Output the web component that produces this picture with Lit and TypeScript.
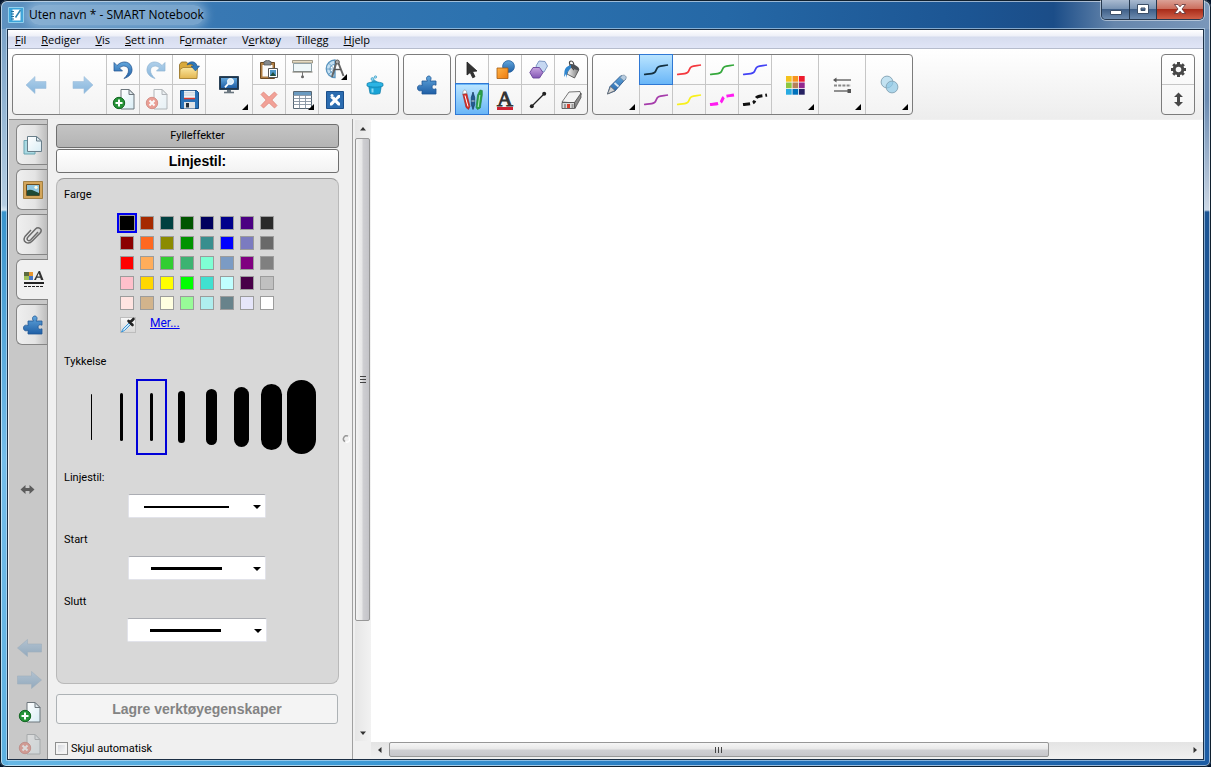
import { LitElement, html, css, svg, nothing, TemplateResult } from "lit";
import { customElement, state } from "lit/decorators.js";
import { classMap } from "lit/directives/class-map.js";
import { styleMap } from "lit/directives/style-map.js";

const icon = (w: number, h: number, body: unknown) =>
  html`<svg class="icon" width=${w} height=${h} viewBox="0 0 ${w} ${h}" aria-hidden="true">${body}</svg>`;

const pageShape = svg`
  <path d="M9 .5h8l5 5v14.500H9z" fill="url(#paper)" stroke="#6d767c"/>
  <path d="M17 .5v5h5z" fill="#dfe7ec" stroke="#6d767c"/>`;

const squiggle = (color: string, width = 1.7, dash = "") =>
  icon(26, 14, svg`<path d="M1 11.500c4-.5 8-.3 10.500-2 2-1.400 1.500-4.500 4-5.700 2.200-1 5-1 9.500-1.800"
    fill="none" stroke=${color} stroke-width=${width} stroke-dasharray=${dash || nothing}/>`);

const puzzle = svg`
  <path d="M5 6h5.500c-2-2.500-.7-5 1.300-5s3.300 2.500 1.200 5H19v4.200c-2.200-1-4-.2-4 1.800s1.800 2.800 4 1.800V19H5v-3.800c-2 1.300-4.500.6-4.500-2.200S3 9.500 5 10.800z"
    fill="url(#blue)" stroke="#1f5796" stroke-width=".8"/>`;

const bigArrow = (flip: boolean) => icon(22, 18, svg`
  <path transform=${flip ? "translate(22 0) scale(-1 1)" : nothing} d="M1 9 10 .5v5h11v7H10v5z" fill="url(#sky)" stroke="#9fc0dc" stroke-width=".6"/>`);

const railArrow = (flip: boolean) => icon(25, 18, svg`
  <path transform=${flip ? "translate(25 0) scale(-1 1)" : nothing} d="M.5 9 10.500.5v4.500h14v8h-14v4.500z" fill="url(#slate)" stroke="#8fa6ba" stroke-width=".6"/>`);

const icons: Record<string, TemplateResult> = {
  back: bigArrow(false),
  forward: bigArrow(true),
  undo: icon(20, 20, svg`<path d="M1 2.500v8.500h8.500L6.500 8c3-3 8.500-2.500 9 2 .2 3-1.500 5.500-4.500 8.500 5-1.500 8.500-5 8-9.500C18.300 1.500 9.500-.5 4 5.500z" fill="url(#blue)" stroke="#1d4f8c" stroke-width=".7"/>`),
  redo: icon(20, 20, svg`<path transform="translate(20 0) scale(-1 1)" d="M1 2.500v8.500h8.500L6.500 8c3-3 8.500-2.500 9 2 .2 3-1.500 5.500-4.500 8.500 5-1.500 8.500-5 8-9.500C18.300 1.500 9.500-.5 4 5.500z" fill="url(#sky)" stroke="#90b4d2" stroke-width=".7"/>`),
  open: icon(22, 20, svg`
    <path d="M1.500 18V4.500L3.500 2h5l1.500 2h8v14z" fill="#d9a93a" stroke="#8a6a23" stroke-width=".8"/>
    <path d="M1.500 18.500 2 9.500 5 7.500h14.500l-.5 11z" fill="url(#gold)" stroke="#a17c2c" stroke-width=".8"/>
    <path d="M9 5c2-4.500 9-4.500 10 1h2.500L17.500 11 13 6h2.500c-1-2.500-4-2.500-6.500-1z" fill="#2f79b9" stroke="#1d4f8c" stroke-width=".6"/>`),
  addPage: icon(23, 21, svg`${pageShape}<circle cx="7" cy="14" r="5.700" fill="#259337" stroke="#126522"/>
    <path d="M7 10.500v7M3.500 14h7" stroke="#fff" stroke-width="2"/>`),
  delPage: icon(23, 21, svg`<g opacity=".5">${pageShape}<circle cx="7" cy="14" r="5.700" fill="#e04a36" stroke="#b52f20"/>
    <path d="m4.500 11.500 5 5m0-5-5 5" stroke="#fff" stroke-width="2"/></g>`),
  save: icon(19, 19, svg`
    <path d="M.5.500h16l2 2v16H.5z" fill="#2872b8" stroke="#164a80"/>
    <path d="M4 .8h11V9H4z" fill="#eef3f7"/><path d="M4 2.800h11M4 5h11" stroke="#b9c7d3" stroke-width=".8"/>
    <path d="M4 8.500h11" stroke="#d8372c" stroke-width="1.500"/>
    <path d="M4 12h11v6.500H4z" fill="#dfe3e6"/><path d="M6 13h3v4.500H6z" fill="#24303c"/>`),
  screen: icon(20, 18, svg`
    <path d="M.5.500h19v13H.5z" fill="#20364c" stroke="#2c4358"/><path d="M2 2h16v10H2z" fill="url(#blue)"/>
    <circle cx="11.500" cy="5.500" r="3" fill="#d8ecf9" stroke="#fff"/><path d="m9.300 7.700-3.300 3.600" stroke="#fff" stroke-width="1.800"/>
    <path d="M8 14h4v2H8z" fill="#6a767f"/><path d="M5 16.500h10" stroke="#6a767f" stroke-width="1.600"/>`),
  paste: icon(20, 20, svg`
    <path d="M1.500 2.500h14v16h-14z" fill="#b07f45" stroke="#6a4923"/><path d="M3.500 5h10v11.500h-10z" fill="#fafafa"/>
    <path d="M5 1.500h1.500a2 2 0 0 1 4 0H12V5H5z" fill="#84898d" stroke="#54585b" stroke-width=".8"/>
    <path d="M9.500 8.500h9v9h-9z" fill="#fff" stroke="#555"/><path d="M11 10h6v6h-6z" fill="#4d95c6"/><path d="m11 16 3-4 3 4z" fill="#214e3e"/>`),
  remove: icon(18, 18, svg`<path d="M3.500 1 9 6.200 14.500 1 17 3.500 11.800 9l5.200 5.500-2.500 2.500L9 11.800 3.500 17 1 14.500 6.200 9 1 3.500z" fill="#f2a197" stroke="#dd8479" stroke-width=".8"/>`),
  shade: icon(21, 19, svg`
    <path d="M.5.500h20v2.500H.5z" fill="#e5dcc4" stroke="#8b8472" stroke-width=".8"/><path d="M1.500 3.500h18v8h-18z" fill="#eef7f9" stroke="#8fa0a6"/>
    <path d="M.5 12h20" stroke="#736f63"/><path d="M10.500 12v5" stroke="#777"/><circle cx="10.500" cy="16.800" r="1.500" fill="#666"/>`),
  table: icon(19, 18, svg`
    <path d="M.5.500h18v17H.5z" fill="#fff" stroke="#566673"/><path d="M1 1h17v3H1z" fill="#6a9ac0"/>
    <path d="M.5 4.500h18M.5 7.500h18M.5 10.500h18M.5 13.500h18M6.500 4v13.500M12.500 4v13.500" stroke="#8592a0" stroke-width=".9"/>`),
  measure: icon(22, 21, svg`
    <path d="M11 1A8.700 8.700 0 0 0 11 18.500z" fill="#c5e0f2" stroke="#5b95bf" stroke-width="1.300"/>
    <path d="M10.500 5.500a4.500 4.500 0 0 0 0 9z" fill="#fff" stroke="#5b95bf"/><path d="M2.500 10H10M4.500 4l6 6-6 5.500" stroke="#5b95bf" stroke-width=".8" fill="none"/>
    <path d="M12.500 3 8 18M14 3l5.500 14" stroke="#666" stroke-width="2"/><circle cx="13.300" cy="3" r="2" fill="#aaa" stroke="#555"/><path d="M10 10.500h7" stroke="#555" stroke-width="1.400"/>`),
  exchange: icon(18, 18, svg`
    <path d="M.5.500h17v17H.5z" fill="#2b6cb0" stroke="#1b4f8a"/>
    <path d="M4 6.500 7 9l-3 3v2.500h2l3-3 3 3h2V12l-3-3 3-2.500V4h-2L9.500 7 8 5.500" fill="#fff"/><circle cx="6" cy="4.500" r="1.500" fill="#fff"/>`),
  cup: icon(18, 20, svg`
    <circle cx="6.500" cy="4" r="1.500" fill="#8bd5f0" stroke="#2791bd" stroke-width=".6"/><circle cx="9.500" cy="2" r="1.200" fill="#a0dcf3" stroke="#2791bd" stroke-width=".6"/>
    <path d="M4 8 8 4.500 13.500 8z" fill="#3aa6cf"/>
    <path d="M2.500 10h13l-1.500 8.500c-3 1-7 1-10 0z" fill="#19a3d6" stroke="#0f7ba6" stroke-width=".7"/>
    <path d="M1 8.500c3-2 13-2 16 0v2.500c-3 1.500-13 1.500-16 0z" fill="#2cb4e4" stroke="#0f7ba6" stroke-width=".7"/>
    <path d="M6.500 13.500v4" stroke="#8bd9f4" stroke-width="2"/>`),
  puzzle: icon(21, 20, puzzle),
  pointer: icon(12, 18, svg`<path d="M1 1v13l3.200-2.500 2.500 5.300 2.300-1.100L6.500 10.500l4.500-.5z" fill="#333" stroke="#222" stroke-width=".8"/>`),
  shapes: icon(19, 19, svg`<circle cx="12.500" cy="6.500" r="5.900" fill="url(#blue)" stroke="#265f9d" stroke-width=".8"/>
    <path d="M1 8h11v10.500H1z" fill="url(#orange)" stroke="#a55a11" stroke-width=".8"/>`),
  polygons: icon(19, 19, svg`<path d="m10 1 6 .5 2.500 4.500-3.500 6-6-1L7 6z" fill="#c6d8f2" stroke="#7390bd" stroke-width=".9"/>
    <path d="M4 7.500h6.500L14 12.500 10.500 18H4L.8 12.500z" fill="url(#purple)" stroke="#67439a" stroke-width=".9"/>`),
  fill: icon(18, 20, svg`<path d="m8 4.500 9 5-4.500 8.500-7.500-4z" fill="url(#metal)" stroke="#444" stroke-width=".8"/>
    <path d="M12 10C6 4 7 1 9 1s3 2 3 6" fill="none" stroke="#444" stroke-width="1.200"/><ellipse cx="12.500" cy="7" rx="5" ry="1.900" transform="rotate(29 12.500 7)" fill="#4a4f55"/>
    <path d="M9 5C5 6 3 8 2.500 11L2 17l2-3 .5 4 1-6L9 8z" fill="#2f86cf"/>`),
  pens: icon(21, 22, svg`
    <path d="m.8 5 4-.8L8 17.500 6.500 20.500 4 18.500z" fill="#d42a25" stroke="#9b2825" stroke-width=".6"/><path d="M.8 5c0-3 .7-4 2-4s2 1.500 2 3.200z" fill="#fff" stroke="#888" stroke-width=".6"/><path d="m3 6.500 3 11" stroke="#fff" stroke-width="1"/>
    <path d="M9.300 8.500 11 3l1.700 5.500v7L11 20.500l-1.700-5z" fill="#245b92" stroke="#173a5d" stroke-width=".7"/><path d="M9.500 12h3" stroke="#cfd8e0"/>
    <path d="m15.500 6 2.500-5 2.300.5V6l-2 13-2.800 1.500-1.500-2z" fill="#2aa14b" stroke="#1d7a36" stroke-width=".6"/><path d="m17.800 6-1.600 12" stroke="#a8e2b5" stroke-width="1.200"/>`),
  text: html`<span class="letter">A</span>`,
  line: icon(18, 18, svg`<path d="M3 15 15 3" stroke="#222" stroke-width="1.200"/><circle cx="2.800" cy="15.200" r="2" fill="#222"/><circle cx="15.200" cy="2.800" r="2" fill="#222"/>`),
  eraser: icon(21, 20, svg`
    <path d="m1 12 7-10 11-.5 1 3-6.500 8.500z" fill="#f3f3f3" stroke="#555" stroke-width=".8"/>
    <path d="M13.500 12.500 20 3v4.500l-6 11z" fill="#8c8c8c" stroke="#444" stroke-width=".7"/><path d="M1 12.500h12.500v6H1z" fill="#dcdcdc" stroke="#444" stroke-width=".8"/><path d="M6 14h3v4H6z" fill="#d6402f"/><path d="M3 14h2v4H3zM10.500 14h2v4h-2z" fill="#9a9a9a"/>`),
  pen: icon(21, 21, svg`<path d="m15 1.500 4.500 3.500L9 17l-7.500 3L4 12.500z" fill="url(#blue)" stroke="#234c82" stroke-width=".8"/>
    <path d="M14 3.500c2-2.500 4-3 5.500-1.500s.5 3-1.500 5z" fill="#b5cbe0" stroke="#6c8397" stroke-width=".7"/><path d="m4.500 12.500 4.500 4-7.500 3.500z" fill="#d5d5d5" stroke="#666" stroke-width=".7"/><path d="m8.500 9 4 3.500" stroke="#dce8f2" stroke-width="1.800"/>`),
  palette: icon(20, 20, svg`${["#f4c21c", "#f7941e", "#ed1c2e", "#8dc63f", "#b5815a", "#92278f", "#29abe2", "#0071bc", "#262262"].map(
    (c, i) => svg`<rect x=${1 + (i % 3) * 6.500} y=${1 + Math.floor(i / 3) * 6.500} width="5.700" height="5.700" fill=${c}/>`)}`),
  lineStyles: icon(18, 18, svg`<path d="M2 4h16" stroke="#909090" stroke-width="2"/><path d="m0 4 3.500-2.500v5z" fill="#555"/>
    <path d="M1 9.500h17" stroke="#8a8a8a" stroke-width="2.200" stroke-dasharray="3 1.200"/><path d="M1 15h15" stroke="#909090" stroke-width="2"/><path d="M14.500 13H18v4h-3.500z" fill="#555"/>`),
  transparency: icon(19, 19, svg`<circle cx="7" cy="7" r="5.900" fill="#b5dcef" fill-opacity=".8" stroke="#8aa9ba"/><circle cx="12" cy="12" r="5.900" fill="#8cc8e6" fill-opacity=".7" stroke="#8aa9ba"/>`),
  gear: icon(17, 17, svg`<path d="M8.500 1v15M1 8.500h15M3.200 3.200l10.600 10.600M13.800 3.200 3.200 13.800" stroke="#484848" stroke-width="3"/><circle cx="8.500" cy="8.500" r="4.300" fill="#f9f9f9" stroke="#484848" stroke-width="3"/>`),
  upDown: icon(11, 15, svg`<path d="M5.500.5 10 5H7v5h3l-4.500 4.500L1 10h3V5H1z" fill="#484848"/>`),
  leftRight: icon(15, 11, svg`<path d="M.5 5.500 5.500 1v3h4V1l5 4.500-5 4.500V7h-4v3z" fill="#5c5c5c"/>`),
  pages: icon(20, 20, svg`<path d="M1 5.500h11v13.500H1z" fill="#a9d9e2" stroke="#6ba5b2"/><path d="M4.500 1.500h9L18.500 6v10.500h-14z" fill="url(#paper)" stroke="#697e8a"/><path d="M13.500 1.500V6h5z" fill="#dce8ee" stroke="#697e8a"/>`),
  picture: icon(20, 18, svg`<path d="M.5.500h19v17H.5z" fill="#d3a55a" stroke="#94702f" stroke-width=".8"/><path d="M3.500 3.500h13v11h-13z" fill="#8fc6de" stroke="#6e4e1d"/>
    <path d="M4 9.500c4-2 8 1 12 2.500v2.500H4z" fill="#1f4a35"/><circle cx="13" cy="6.300" r="1.600" fill="#fffbe2"/>`),
  clip: icon(20, 19, svg`<path d="m15 7-7 7.500c-3 3-5-.5-3-2.500l7.500-8c2.500-2.500 7.500-.5 5 3.500L9.500 15.800c-4.500 4.700-10.500 1-7.500-4.300l6-6.500" fill="none" stroke="#6b6b6b" stroke-width="1.500"/>`),
  properties: icon(20, 17, svg`
    <path d="M0 1h5v4H0z" fill="#5b6a3f"/><path d="M5 1h4v4H5z" fill="#e9962e"/><path d="M0 5h5v4H0z" fill="#a0bf5a"/><path d="M5 5h4v4H5z" fill="#4574c4"/>
    <path d="M14.700 0h1.300l3.500 9H17l-.8-2.300h-3.400L12 9h-2zm-1.400 5.500h2.600L14.700 2.200z" fill="#333"/>
    <path d="M0 12h20" stroke="#222" stroke-width="2"/><path d="M0 15.500h20" stroke="#222" stroke-dasharray="3 1"/>`),
  dropper: icon(16, 16, svg`<path d="m10 5-7 7-1.500 3 3-1.500 7-7" fill="#cdeafc" stroke="#3b94d6"/><path d="m8.500 4 4 4M10 5.500 13.500 2" stroke="#222" stroke-width="2.600" stroke-linecap="round"/>`),
};

interface Tool { id: string; label: string; icon: TemplateResult; menu?: boolean; off?: boolean; }
const t = (id: string, label: string, menu = false, off = false): Tool => ({ id, label, icon: icons[id], menu, off });
const stroke = (id: string, label: string, drawn: TemplateResult): Tool => ({ id, label, icon: drawn });

const groups: Tool[][][] = [
  [
    [t("back", "Forrige side", false, true)], [t("forward", "Neste side", false, true)],
    [t("undo", "Angre"), t("addPage", "Legg til side")],
    [t("redo", "Gjør om", false, true), t("delPage", "Slett side", false, true)],
    [t("open", "Åpne"), t("save", "Lagre")],
    [t("screen", "Vis skjermer", true)],
    [t("paste", "Lim inn"), t("remove", "Slett", false, true)],
    [t("shade", "Skjermskygge"), t("table", "Tabell", true)],
    [t("measure", "Måleverktøy", true), t("exchange", "SMART Exchange")],
    [t("cup", "Aktivitet")],
  ],
  [[t("puzzle", "Tillegg")]],
  [
    [t("pointer", "Velg"), t("pens", "Penner")], [t("shapes", "Former"), t("text", "Tekst")],
    [t("polygons", "Mangekanter"), t("line", "Linjer")], [t("fill", "Fyll"), t("eraser", "Viskelær")],
  ],
  [
    [t("pen", "Penntype", true)],
    [stroke("black", "Svart", squiggle("#14303f")), stroke("violet", "Fiolett", squiggle("#a63cab"))],
    [stroke("red", "Rød", squiggle("#f4393f")), stroke("yellow", "Gul", squiggle("#f8f01c"))],
    [stroke("green", "Grønn", squiggle("#35a83c")), stroke("magenta", "Magenta stiplet", squiggle("#ff1cf0", 3, "8 3 6 3"))],
    [stroke("blue", "Blå", squiggle("#4242f5")), stroke("dashed", "Svart stiplet", squiggle("#111", 3, "7 3 3 3"))],
    [t("palette", "Farge", true)], [t("lineStyles", "Linjestil", true)], [t("transparency", "Gjennomsiktighet", true)],
  ],
];

const menus = [["", "F", "il"], ["", "R", "ediger"], ["", "V", "is"], ["", "S", "ett inn"], ["F", "o", "rmater"], ["V", "e", "rktøy"], ["Tille", "g", "g"], ["", "H", "jelp"]];

const swatches = [
  "#000000", "#a52a00", "#004040", "#005500", "#00005e", "#00008b", "#4b0082", "#2a2a2a",
  "#8b0000", "#ff6820", "#8b8b00", "#009300", "#388e8e", "#0000ff", "#7b7bc0", "#696969",
  "#ff0000", "#ffad5b", "#32cd32", "#3cb371", "#7fffd4", "#7b9bc4", "#800080", "#808080",
  "#ffc0cb", "#ffd700", "#ffff00", "#00ff00", "#40e0d0", "#c0ffff", "#480048", "#c0c0c0",
  "#ffe4e1", "#d2b48c", "#ffffe0", "#98fb98", "#afeeee", "#68838b", "#e6e6fa", "#ffffff",
];

const weights = [[1, 46], [3, 48], [3, 48], [7, 52], [11, 56], [15, 60], [21, 66], [29, 74]];

@customElement("app-root")
export class AppRoot extends LitElement {
  @state() private tool = "pens";
  @state() private pen = "black";
  @state() private swatch = 0;
  @state() private weight = 2;
  @state() private tab = "properties";

  static styles = css`
    :host { display: block; height: 100vh; background: #04142b; font-family: "Open Sans", "Noto Sans", sans-serif; font-size: 11px; line-height: 16px; color: #000; }
    *, *::before, *::after { box-sizing: border-box; }
    button { margin: 0; padding: 0; border: 0; background: none; font: inherit; color: inherit; display: flex; align-items: center; justify-content: center; }
    .icon { display: block; flex: none; }
    .defs { display: block; width: 0; height: 0; }

    .window { height: 100%; display: flex; flex-direction: column; padding: 0 7px 7px; border-radius: 7px 7px 6px 6px;
      box-shadow: inset 0 0 0 1px #10202f, inset 0 0 0 2px rgba(255, 255, 255, .55);
      background:
        linear-gradient(90deg, #5f92c0, #3878b3 18%, #2c72af 40%, #2568a6 60%, #1c5593 80%, #1b4d88 87%, #6686ac 92%, #7a97ba) top / 100% 29px no-repeat,
        linear-gradient(#7ba3c8 30px, #b4cde2 205px, #d3e3ef 210px, #3a94cc 212px, #74bdea 460px, #5cb0e0) left / 8px 100% no-repeat,
        linear-gradient(#6c8cb2 100px, #c3d0e0 200px, #ccd8e6 210px, #1c5493 212px, #1d5da5) right / 8px 100% no-repeat,
        linear-gradient(90deg, #68b8e5, #3e9bd6 28%, #2474bb 60%, #1c5ca3) bottom / 100% 8px no-repeat; }

    .title { height: 29px; flex: none; display: flex; align-items: flex-start; }
    .caption { flex: 1; display: flex; align-items: center; gap: 5px; height: 29px; padding-left: 1px; }
    .caption h1 { margin: 0; font-size: 12px; font-weight: 400; line-height: 20px; border-radius: 10px; background: rgba(190, 214, 235, .45); box-shadow: 0 0 8px 3px rgba(190, 214, 235, .45); }
    .controls { display: flex; height: 20px; border: 1px solid #26384e; border-top: 0; border-radius: 0 0 5px 5px; box-shadow: 0 0 0 1px rgba(255, 255, 255, .45); overflow: hidden; }
    .controls button { width: 28px; height: 19px; border-right: 1px solid #26384e; background: linear-gradient(#a9bad0, #7a94b4 45%, #3f5f88 50%, #6e8cb0); }
    .controls .max { width: 27px; }
    .controls .close { width: 46px; border-right: 0; background: linear-gradient(#dba196, #cc6f5e 45%, #a92c1a 50%, #cf5f47); }

    .client { flex: 1; min-height: 0; display: flex; flex-direction: column; border: 1px solid #1c2f45; background: #f0f0f0; box-shadow: 0 0 0 1px rgba(200, 225, 245, .6); }
    .menu { height: 19px; flex: none; display: flex; align-items: center; gap: 15px; padding: 1px 7px 0; border-bottom: 1px solid #b6bccc; background: linear-gradient(#fff, #eef0f8 6px, #d6dcee 7px, #e0e5f6); }
    .menu u { text-underline-offset: 1px; }

    .toolbar { flex: none; height: 70px; display: flex; gap: 4px; padding: 5px 8px 0 4px; background: linear-gradient(#fff, #ededed); }
    .group { display: flex; height: 61px; border: 1px solid #7c7c7c; border-radius: 4px; background: linear-gradient(#fff, #f3f3f3); }
    .group.end { margin-left: auto; }
    .column { display: flex; flex-direction: column; width: 33px; border-right: 1px solid #c6c6c6; }
    .column.single { width: 47px; }
    .column:last-child { width: 32px; border-right: 0; }
    .column.single:last-child { width: 46px; }
    .tool { flex: 1; position: relative; }
    .tool + .tool { border-top: 1px solid #c6c6c6; }
    .tool.on { z-index: 1; border-color: transparent; background: linear-gradient(#b9e4ff, #69b6f7); background-clip: border-box; box-shadow: 0 0 0 1px #2f78d4; }
    .tool.menu-mark::after { content: ""; position: absolute; right: 4px; bottom: 4px; border-left: 6px solid transparent; border-bottom: 6px solid #000; }
    .letter { font: 400 22px/17px "Liberation Serif", serif; color: #333; border-bottom: 3px solid #cf2030; -webkit-text-stroke: 1px #333; }

    .body { flex: 1; min-height: 0; display: flex; }
    .rail { width: 39px; flex: none; margin-left: 1px; display: flex; flex-direction: column; padding: 4px 0 0 7px; background: #c8c8c8; border: solid #909090; border-width: 1px 1px 0 0; }
    .tabs { display: flex; flex-direction: column; gap: 4px; }
    .tab { height: 41px; border: 1px solid #858585; border-right: 0; border-radius: 6px 0 0 6px; background: linear-gradient(90deg, #efefef, #e4e4e4 60%, #bdbdbd); padding-left: 2px; }
    .tab.on { margin-right: -1px; background: #f0f0f0; }
    .resize { flex: 1; margin-right: 9px; }
    .nav { display: flex; flex-direction: column; gap: 2px; margin-right: 5px; }
    .nav button { height: 30px; }
    .faded { opacity: .7; }

    .side { flex: none; width: 305px; display: flex; border-right: 1px solid #a0a0a0; font-family: Roboto, "Open Sans", sans-serif; }
    .pane { flex: 1; display: flex; flex-direction: column; padding: 5px 0 0 8px; }
    .grip { width: 13px; display: flex; align-items: center; justify-content: center; }
    .head { height: 24px; flex: none; border: 1px solid #6f6f6f; border-radius: 3px; background: linear-gradient(#c4c4c4, #b4b4b4); }
    .head.current { margin-top: 1px; background: linear-gradient(#fff, #f2f2f2); font: 700 14px/16px "Liberation Sans", Arial, sans-serif; }
    .props { flex: 1; min-height: 0; margin-top: 5px; padding: 8px 8px 0 7px; border: 1px solid #b9b9b9; border-top-color: #999; border-radius: 8px; background: #d8d8d8; display: flex; flex-direction: column; align-items: center; overflow: hidden; }
    .props h2, .props label { align-self: stretch; margin: 0; font-size: 11px; font-weight: 400; line-height: 16px; }
    .swatches { display: grid; grid-template-columns: repeat(8, 20px); grid-auto-rows: 20px; place-items: center; margin-top: 10px; }
    .swatch { width: 14px; height: 14px; border: 1px solid #9c9c9c; }
    .swatch.on { width: 16px; height: 16px; outline: 2px solid #0000f0; }
    .more { width: 160px; display: flex; gap: 14px; padding-left: 3px; margin: 4px 0 21px; }
    .more button { width: 16px; height: 16px; background: linear-gradient(#fafafa, #d6d6d6); box-shadow: inset 0 0 0 1px #bdbdbd; }
    .more a { font-size: 12px; line-height: 12px; height: 16px; color: #0000f0; }
    .weights { width: 242px; display: flex; margin: 9px 0 15px; }
    .weight { width: 31px; height: 76px; margin-right: -1px; flex: none; border: 2px solid transparent; }
    .weight.on { border-color: #0000d8; }
    .weight span { flex: none; background: #000; border-radius: 15px; }
    .choice { display: grid; margin: 8px 0 14px; width: 138px; height: 24px; }
    .choice.wide { width: 140px; }
    .choice > * { grid-area: 1 / 1; }
    .choice select { appearance: none; width: 100%; height: 24px; border: 1px solid #e2e3ea; border-top-color: #abadb3; border-radius: 2px; background: #fff; }
    .choice .face { pointer-events: none; display: flex; align-items: center; justify-content: space-between; padding: 1px 5px 0 16px; }
    .choice .bar { width: 85px; height: 2px; background: #000; }
    .choice .bar.thick { width: 71px; height: 3px; margin-left: 7px; }
    .choice .drop { border: 4px solid transparent; border-top-color: #000; border-bottom: 0; }
    .save { height: 30px; flex: none; margin: 10px 1px 14px 0; border: 1px solid #adb2b5; border-radius: 3px; background: #f4f4f4; color: #838383; font: 700 14px/16px "Liberation Sans", Arial, sans-serif; }
    .auto { height: 21px; flex: none; display: flex; align-items: center; gap: 3px; }
    .auto input { appearance: none; margin: 0 0 0 -1px; width: 13px; height: 13px; border: 1px solid #8e8f8f; background: linear-gradient(135deg, #cdd0d6, #fff) #fff; box-shadow: inset 0 0 0 2px #f4f4f4; }

    .vbar { flex: none; width: 16px; margin: 1px 0 18px 2px; display: flex; flex-direction: column; background: linear-gradient(90deg, #e6e6e6, #f2f2f2); }
    .vbar button { height: 17px; flex: none; }
    .track { flex: 1; display: flex; padding-top: 1px; min-height: 0; }
    .thumb { border: 1px solid #979797; border-radius: 2px; display: flex; align-items: center; justify-content: center; }
    .vbar .thumb { width: 15px; background: linear-gradient(90deg, #f4f4f4, #e6e6e6 48%, #cfcfd2 52%, #c4c4c8); }
    .main { flex: 1; min-width: 0; display: flex; flex-direction: column; padding-top: 1px; }
    .canvas { flex: 1; background: #fff; }
    .hbar { height: 17px; flex: none; display: flex; padding-bottom: 2px; background: linear-gradient(#e4e4e4, #f0f0f0); }
    .hbar button { width: 17px; flex: none; }
    .hbar .track { padding: 0 0 0 1px; }
    .hbar .thumb { background: linear-gradient(#f6f6f6, #e8e8e8 48%, #d0d0d3 52%, #c6c6ca); }
  `;

  private pick(id: string) {
    if (["pointer", "pens", "shapes", "text", "polygons", "line", "fill", "eraser"].includes(id)) this.tool = id;
    if (["black", "violet", "red", "yellow", "green", "magenta", "blue", "dashed"].includes(id)) this.pen = id;
  }

  private renderTool(tool: Tool) {
    const on = tool.id === this.tool || tool.id === this.pen;
    return html`<button class=${classMap({ tool: true, on, "menu-mark": !!tool.menu })} aria-label=${tool.label}
      ?disabled=${tool.off} @click=${() => this.pick(tool.id)}>${tool.icon}</button>`;
  }

  private renderGroup(columns: Tool[][]) {
    return html`<div class="group">${columns.map((c) => html`
      <div class=${classMap({ column: true, single: c.length === 1 })}>${c.map((tool) => this.renderTool(tool))}</div>`)}</div>`;
  }

  private renderChoice(id: string, label: string, thick: boolean, wide: boolean) {
    return html`
      <label for=${id}>${label}</label>
      <div class=${classMap({ choice: true, wide })}>
        <select id=${id}><option></option></select>
        <div class="face"><span class=${classMap({ bar: true, thick })}></span><span class="drop"></span></div>
      </div>`;
  }

  private renderArrow(d: string) {
    return icon(8, 8, svg`<path d=${d} fill="#333"/>`);
  }

  render() {
    const tabs = [["pages", "Sidesortering"], ["picture", "Galleri"], ["clip", "Vedlegg"], ["properties", "Egenskaper"], ["puzzle", "Tillegg"]];
    return html`
      <div class="window">
        <header class="title">
          <div class="caption">
            ${icon(16, 16, svg`<path d="M.5.500h15v15H.5z" fill="#3ba3d8" stroke="#8fd0ee"/><path d="M4.500 2.500h8v11h-8z" fill="#fff"/><path d="M3 4.500h3M3 7h3M3 9.500h3M3 12h3" stroke="#256f9c"/><path d="m12.500 3-5 7.500" stroke="#2b7fae" stroke-width="1.500"/>`)}
            <h1>Uten navn * - SMART Notebook</h1>
            <svg class="defs" aria-hidden="true"><defs>
              <linearGradient id="blue" x2="0" y2="1"><stop stop-color="#62a6dc"/><stop offset="1" stop-color="#1f5fa6"/></linearGradient>
              <linearGradient id="sky" x2="0" y2="1"><stop stop-color="#b0d0ea"/><stop offset="1" stop-color="#86b5dc"/></linearGradient>
              <linearGradient id="slate" x2="0" y2="1"><stop stop-color="#a9c0d4"/><stop offset="1" stop-color="#7d9db9"/></linearGradient>
              <linearGradient id="gold" x2="0" y2="1"><stop stop-color="#fbe7a0"/><stop offset="1" stop-color="#e3b650"/></linearGradient>
              <linearGradient id="orange" x2="1" y2="1"><stop stop-color="#ffb347"/><stop offset="1" stop-color="#ee7b0f"/></linearGradient>
              <linearGradient id="purple" x2="0" y2="1"><stop stop-color="#c7a5e0"/><stop offset="1" stop-color="#8457b5"/></linearGradient>
              <linearGradient id="metal" x2="1" y2="0"><stop stop-color="#fafafa"/><stop offset="1" stop-color="#777"/></linearGradient>
              <linearGradient id="paper" x2="1" y2="1"><stop stop-color="#fff"/><stop offset="1" stop-color="#d9edf5"/></linearGradient>
            </defs></svg>
          </div>
          <div class="controls">
            <button aria-label="Minimer">${icon(12, 10, svg`<path d="M.5 5.500h11v4H.5z" fill="#fff" stroke="#3c4f68"/>`)}</button>
            <button class="max" aria-label="Maksimer">${icon(12, 11, svg`<path fill-rule="evenodd" d="M.5.500h11v9H.5zM4 4v2.500h4V4z" fill="#fff" stroke="#3c4f68"/>`)}</button>
            <button class="close" aria-label="Lukk">${icon(12, 11, svg`<path d="M.5.500h3.500L6 2.800 8 .5h3.500L8 5l3.500 4.500H8L6 7.200 4 9.500H.5L4 5z" fill="#fff" stroke="#5b2f33" stroke-width=".8"/>`)}</button>
          </div>
        </header>
        <div class="client">
          <nav class="menu">${menus.map(([a, key, b]) => html`<button>${html`<span>${a}<u>${key}</u>${b}</span>`}</button>`)}</nav>
          <div class="toolbar">
            ${groups.map((g) => this.renderGroup(g))}
            <div class="group end"><div class="column">
              <button class="tool" aria-label="Tilpass verktøylinjen">${icons.gear}</button>
              <button class="tool" aria-label="Flytt verktøylinjen">${icons.upDown}</button>
            </div></div>
          </div>
          <div class="body">
            <div class="rail">
              <div class="tabs">${tabs.map(([id, label]) => html`
                <button class=${classMap({ tab: true, on: id === this.tab })} aria-label=${label} @click=${() => (this.tab = id)}>${icons[id]}</button>`)}</div>
              <button class="resize" aria-label="Flytt sidepanel">${icons.leftRight}</button>
              <div class="nav">
                <button class="faded" disabled aria-label="Forrige side">${railArrow(false)}</button>
                <button class="faded" disabled aria-label="Neste side">${railArrow(true)}</button>
                <button aria-label="Legg til side">${icons.addPage}</button>
                <button class="faded" disabled aria-label="Slett side">${icons.delPage}</button>
              </div>
            </div>
            <aside class="side">
              <div class="pane">
                <button class="head">Fylleffekter</button>
                <button class="head current">Linjestil:</button>
                <section class="props">
                  <h2>Farge</h2>
                  <div class="swatches">${swatches.map((c, i) => html`
                    <button class=${classMap({ swatch: true, on: i === this.swatch })} aria-label=${c} style=${styleMap({ background: c })} @click=${() => (this.swatch = i)}></button>`)}</div>
                  <div class="more"><button aria-label="Velg farge fra skjermen">${icons.dropper}</button><a href="#">Mer...</a></div>
                  <h2>Tykkelse</h2>
                  <div class="weights">${weights.map(([w, h], i) => html`
                    <button class=${classMap({ weight: true, on: i === this.weight })} aria-label="Tykkelse ${i + 1}" @click=${() => (this.weight = i)}>
                      <span style=${styleMap({ width: `${w}px`, height: `${h}px` })}></span></button>`)}</div>
                  ${this.renderChoice("style", "Linjestil:", false, false)}
                  ${this.renderChoice("start", "Start", true, false)}
                  ${this.renderChoice("end", "Slutt", true, true)}
                </section>
                <button class="save" disabled>Lagre verktøyegenskaper</button>
                <label class="auto"><input type="checkbox">Skjul automatisk</label>
              </div>
              <div class="grip">${icon(8, 8, svg`<path d="M6 1.200A2.800 2.800 0 0 0 3 6.500" fill="none" stroke="#999" stroke-width="1.500"/><path d="M7 2.500A2.800 2.800 0 0 1 4 7" fill="none" stroke="#fff" stroke-width="1.500"/>`)}</div>
            </aside>
            <div class="vbar">
              <button aria-label="Rull opp">${this.renderArrow("M1 5.500 4 2l3 3.500z")}</button>
              <div class="track"><div class="thumb" style=${styleMap({ height: "82.5%" })}>${icon(8, 8, svg`<path d="M1 .5h6M1 3.500h6M1 6.500h6" stroke="#444"/>`)}</div></div>
              <button aria-label="Rull ned">${this.renderArrow("M1 2.500l3 3.500 3-3.500z")}</button>
            </div>
            <div class="main">
              <main class="canvas"></main>
              <div class="hbar">
                <button aria-label="Rull til venstre">${this.renderArrow("M5.500 1 2 4l3.500 3z")}</button>
                <div class="track"><div class="thumb" style=${styleMap({ width: "82.8%" })}>${icon(8, 8, svg`<path d="M.5 1v6M3.500 1v6M6.500 1v6" stroke="#444"/>`)}</div></div>
                <button aria-label="Rull til høyre">${this.renderArrow("M2.500 1l3.500 3-3.500 3z")}</button>
              </div>
            </div>
          </div>
        </div>
      </div>`;
  }
}
